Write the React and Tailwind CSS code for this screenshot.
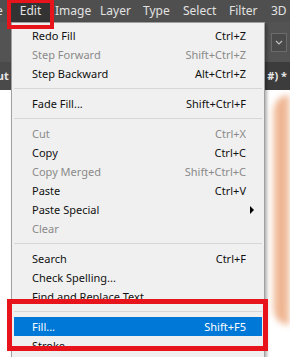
const items = [
	{ label: "Redo Fill", key: "Ctrl+Z" },
	{ label: "Step Forward", key: "Shift+Ctrl+Z", off: true },
	{ label: "Step Backward", key: "Alt+Ctrl+Z" },
	"sep",
	{ label: "Fade Fill...", key: "Shift+Ctrl+F" },
	"sep",
	{ label: "Cut", key: "Ctrl+X", off: true },
	{ label: "Copy", key: "Ctrl+C" },
	{ label: "Copy Merged", key: "Shift+Ctrl+C", off: true },
	{ label: "Paste", key: "Ctrl+V" },
	{ label: "Paste Special", sub: true },
	{ label: "Clear", off: true },
	"sep",
	{ label: "Search", key: "Ctrl+F" },
	{ label: "Check Spelling..." },
	{ label: "Find and Replace Text" },
	"sep",
	{ label: "Fill...", key: "Shift+F5", active: true },
	{ label: "Stroke..." },
];

const MenuRow = ({ item }) => {
	if (item === "sep") {
		return (
			<div className="h-[11px] flex items-center px-[2px]">
				<div className="h-px w-full bg-[#d7d7d7]" />
			</div>
		);
	}
	const color = item.active
		? "bg-[#0078d7] text-white"
		: item.off
			? "text-[#8a8a8a]"
			: "text-[#111]";
	return (
		<div className={`h-[19px] mx-[2px] flex items-center justify-between pl-[18px] pr-[16px] ${color}`}>
			<span>{item.label}</span>
			{item.key && <span>{item.key}</span>}
			{item.sub && (
				<svg width="5" height="8" viewBox="0 0 5 8" className="-mr-[9px]">
					<path d="M0 0 L4 4 L0 8 Z" fill="#000" />
				</svg>
			)}
		</div>
	);
};

export default function App() {
	return (
		<div
			className="relative w-[290px] h-[357px] overflow-hidden bg-white"
			style={{ fontFamily: '"Noto Sans", "Open Sans", sans-serif' }}
		>
			{/* menubar */}
			<div className="h-[22px] bg-[#4f4f4f] flex items-center text-[12px] text-[#e2e2e2] whitespace-nowrap">
				<span className="w-[11px] -ml-[4px] pl-0">e</span>
				<span className="bg-[#333] h-full w-[39px] flex items-center justify-center ml-[4px]">Edit</span>
				<span className="w-[45px] ml-[5px]">Image</span>
				<span className="w-[43px]">Layer</span>
				<span className="w-[40px]">Type</span>
				<span className="w-[46px]">Select</span>
				<span className="w-[42px]">Filter</span>
				<span>3D</span>
			</div>

			{/* options bar */}
			<div className="h-[40px] bg-[#535353] flex items-center justify-end pr-[3px]">
				<div className="w-[16px] h-[19px] border border-[#6b6b6b] bg-[#4a4a4a] flex items-center justify-center">
					<svg width="8" height="5" viewBox="0 0 8 5">
						<path d="M1 1 L4 4 L7 1" stroke="#bdbdbd" strokeWidth="1.2" fill="none" />
					</svg>
				</div>
			</div>

			{/* tab bar */}
			<div className="h-[28px] bg-[#3c3c3c] flex items-center justify-between text-[11px] font-bold text-[#e8e8e8]">
				<span className="bg-[#4a4a4a] h-full flex items-center -ml-[10px] pr-[6px]">out</span>
				<span className="pr-[3px]">#) *</span>
			</div>

			{/* canvas */}
			<div className="h-[267px] bg-white flex justify-end pt-[5px]">
				<div className="w-[17px] h-[230px] rounded-l-full bg-gradient-to-r from-[#f3c09c] via-[#e8996a] to-[#f2c3a2] blur-[3px] opacity-80" />
			</div>

			{/* dropdown */}
			<div className="absolute left-[11px] top-[22px] w-[254px] bg-[#f0f0f0] border border-[#a0a0a0] shadow-[2px_2px_3px_rgba(0,0,0,0.3)] pt-[3px] pb-[4px] text-[11px] leading-none">
				{items.map((item, i) => (
					<MenuRow key={i} item={item} />
				))}
			</div>

			{/* annotation boxes */}
			<div className="absolute left-[7px] top-[-1px] w-[47px] h-[30px] border-[4px] border-[#e8141c]" />
			<div className="absolute left-[7px] top-[299px] w-[261px] h-[52px] border-[5px] border-[#e8141c]" />
		</div>
	);
}
